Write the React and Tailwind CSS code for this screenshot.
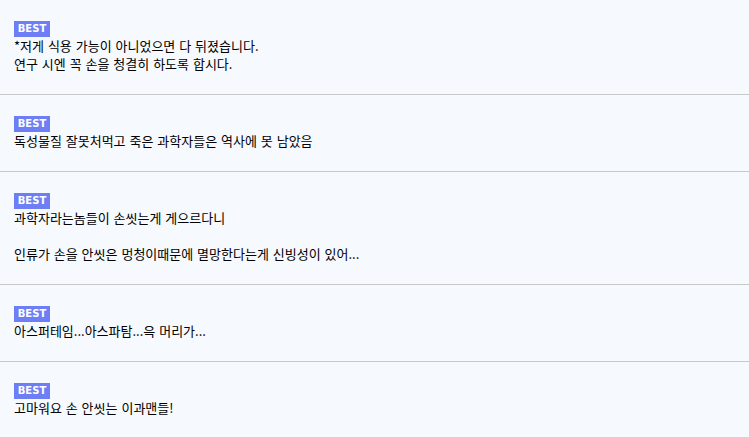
import React from 'react';

const comments = [
  ['*저게 식용 가능이 아니었으면 다 뒤졌습니다.', '연구 시엔 꼭 손을 청결히 하도록 합시다.'],
  ['독성물질 잘못처먹고 죽은 과학자들은 역사에 못 남았음'],
  ['과학자라는놈들이 손씻는게 게으르다니', '', '인류가 손을 안씻은 멍청이때문에 멸망한다는게 신빙성이 있어...'],
  ['아스퍼테임...아스파탐...윽 머리가...'],
  ['고마워요 손 안씻는 이과맨들!'],
];

const App = () => {
  return (
    <div className="min-h-screen w-full bg-[#f6f9fe] font-['Noto_Sans_CJK_KR',sans-serif]">
      {comments.map((lines, i) => (
        <div key={i} className="flex flex-col items-start px-[14px] py-[21px] border-b border-[#c8c8c8]">
          <div className="flex h-4 w-9 items-center justify-center bg-[#6e7ff5] text-[10px] font-bold text-white font-['DejaVu_Sans',sans-serif] leading-none">
            BEST
          </div>
          <div className="text-[13px] leading-[18px] text-black [word-spacing:1px]">
            {lines.map((l, j) => (
              <p key={j} className="h-[18px] whitespace-nowrap">{l}</p>
            ))}
          </div>
        </div>
      ))}
    </div>
  );
};

export default App;
